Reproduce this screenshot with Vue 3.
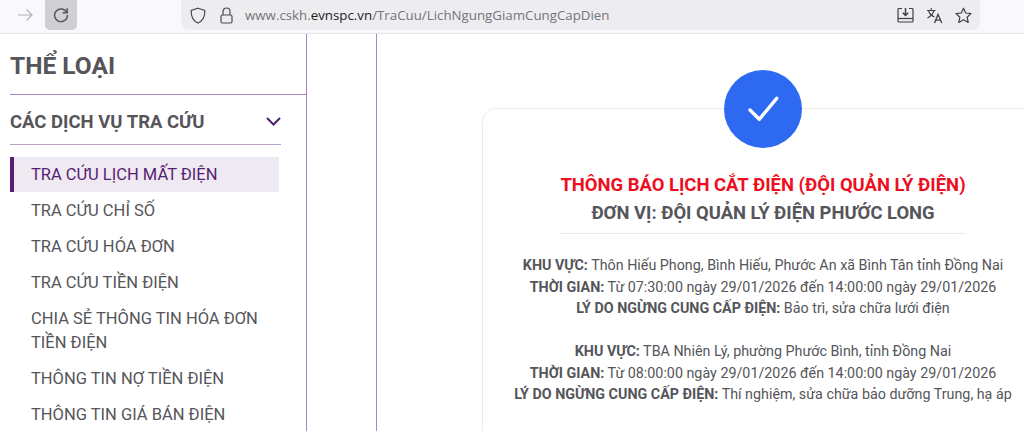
<script setup>
const menuItems = [
  { label: "TRA CỨU LỊCH MẤT ĐIỆN", active: true },
  { label: "TRA CỨU CHỈ SỐ" },
  { label: "TRA CỨU HÓA ĐƠN" },
  { label: "TRA CỨU TIỀN ĐIỆN" },
  { label: "CHIA SẺ THÔNG TIN HÓA ĐƠN TIỀN ĐIỆN" },
  { label: "THÔNG TIN NỢ TIỀN ĐIỆN" },
  { label: "THÔNG TIN GIÁ BÁN ĐIỆN" },
];

const notices = [
  {
    area: "Thôn Hiếu Phong, Bình Hiếu, Phước An xã Bình Tân tỉnh Đồng Nai",
    time: "Từ 07:30:00 ngày 29/01/2026 đến 14:00:00 ngày 29/01/2026",
    reason: "Bảo trì, sửa chữa lưới điện",
  },
  {
    area: "TBA Nhiên Lý, phường Phước Bình, tỉnh Đồng Nai",
    time: "Từ 08:00:00 ngày 29/01/2026 đến 14:00:00 ngày 29/01/2026",
    reason: "Thí nghiệm, sửa chữa bảo dưỡng Trung, hạ áp",
  },
];
</script>

<template>
  <div class="page">
    <header class="toolbar">
      <span class="nav-btn">
        <svg width="16" height="16" viewBox="0 0 16 16" fill="none" stroke="#b4b4b9" stroke-width="1.2">
          <path d="M1 8h14M9.5 2.5 15 8l-5.500 5.500" />
        </svg>
      </span>
      <span class="nav-btn nav-btn--reload">
        <svg width="16" height="16" viewBox="0 0 16 16" fill="none" stroke="#55555f" stroke-width="1.5">
          <path d="M13.800 5.600A6.400 6.400 0 1 0 14.400 8" />
          <path d="M14.200 1.200v4.600H9.600" />
        </svg>
      </span>
      <div class="urlbar">
        <svg class="urlbar__shield" width="16" height="17" viewBox="0 0 16 17" fill="none" stroke="#4a4a52" stroke-width="1.2">
          <path d="M8 1.200 14.800 3.400c.2 6-1.600 10.200-6.800 12.600C2.800 13.600 1 9.400 1.200 3.400Z" />
        </svg>
        <svg class="urlbar__lock" width="13" height="17" viewBox="0 0 13 17" fill="none" stroke="#4a4a52" stroke-width="1.2">
          <path d="M3 8V4.500a3.500 3.500 0 0 1 7 0V8" />
          <rect x="1" y="8" width="11" height="8" rx="1.500" />
        </svg>
        <span class="urlbar__text">www.cskh.<b>evnspc.vn</b>/TraCuu/LichNgungGiamCungCapDien</span>
        <span class="urlbar__actions">
          <svg width="17" height="16" viewBox="0 0 17 16" fill="none" stroke="#3f3f46" stroke-width="1.2">
            <path d="M5 1.500H2a1 1 0 0 0-1 1V14a1 1 0 0 0 1 1h13a1 1 0 0 0 1-1V2.500a1 1 0 0 0-1-1h-3" />
            <path d="M1 11.500h15" />
            <path d="M8.500 1v7M5.800 5.800l2.700 2.700 2.700-2.700" stroke-width="1.500" />
          </svg>
          <svg width="17" height="17" viewBox="0 0 17 17" fill="none" stroke="#3f3f46" stroke-width="1.1">
            <path d="M1 3.500h8.500M5.200 1v2.500M8 3.500C7 7 4.500 9.500 1.500 11M2.500 3.500C3.500 7 6 9 8.500 10" />
            <path d="M8.500 16 12 7.500 15.800 16M9.800 13.200h4.600" stroke-width="1.300" />
          </svg>
          <svg width="17" height="17" viewBox="0 0 17 17" fill="none" stroke="#3f3f46" stroke-width="1.200" stroke-linejoin="round">
            <path d="M8.500 1.200 10.700 6l5.300.6-3.900 3.600 1.100 5.200-4.700-2.700-4.700 2.700L4.900 10.200 1 6.600 6.300 6Z" />
          </svg>
        </span>
      </div>
    </header>

    <div class="content">
      <aside class="sidebar">
        <h2 class="sidebar__title">THỂ LOẠI</h2>
        <div class="sidebar__group">
          <div class="group-head">
            <span>CÁC DỊCH VỤ TRA CỨU</span>
            <svg width="15" height="9" viewBox="0 0 15 9" fill="none" stroke="#4f1f6e" stroke-width="2">
              <path d="M1 1l6.500 6.500L14 1" />
            </svg>
          </div>
          <ul class="menu">
            <li v-for="item in menuItems" :key="item.label" class="menu__item" :class="{ 'menu__item--active': item.active }">
              {{ item.label }}
            </li>
          </ul>
        </div>
      </aside>

      <div class="gutter"></div>

      <main class="main">
        <section class="card">
          <span class="card__badge">
            <svg width="34" height="36" viewBox="0 0 34 36" fill="none" stroke="#fff" stroke-width="3.400" stroke-linecap="round" stroke-linejoin="round">
              <path d="M4 19 13.300 28.300 30.700 7.300" />
            </svg>
          </span>
          <div class="card__inner">
            <h3 class="card__title">THÔNG BÁO LỊCH CẮT ĐIỆN (ĐỘI QUẢN LÝ ĐIỆN)</h3>
            <h4 class="card__unit">ĐƠN VỊ: ĐỘI QUẢN LÝ ĐIỆN PHƯỚC LONG</h4>
            <hr class="card__rule" />
            <div v-for="n in notices" :key="n.area" class="notice">
              <p><strong>KHU VỰC:</strong> {{ n.area }}</p>
              <p><strong>THỜI GIAN:</strong> {{ n.time }}</p>
              <p><strong>LÝ DO NGỪNG CUNG CẤP ĐIỆN:</strong> {{ n.reason }}</p>
            </div>
          </div>
        </section>
      </main>
    </div>
  </div>
</template>

<style scoped>
.page {
  height: 431px;
  overflow: hidden;
  display: flex;
  flex-direction: column;
  background: #fff;
  font-family: Roboto, "Liberation Sans", sans-serif;
  color: #55555a;
}

.toolbar {
  height: 34px;
  flex: none;
  box-sizing: border-box;
  display: flex;
  align-items: flex-start;
  padding-left: 9px;
  background: #f9f9fb;
  border-bottom: 1px solid #e4e4e7;
}

.nav-btn {
  width: 32px;
  height: 30px;
  margin-right: 4px;
  display: flex;
  align-items: center;
  justify-content: center;
  border-radius: 0 0 5px 5px;
}

.nav-btn--reload {
  background: #d0d0d4;
}

.urlbar {
  width: 799px;
  height: 30px;
  margin-left: 100px;
  box-sizing: border-box;
  display: flex;
  align-items: center;
  padding: 0 8px 0 9px;
  background: #ededf0;
  border-radius: 0 0 8px 8px;
}

.urlbar__lock {
  margin-left: 14px;
}

.urlbar__text {
  margin-left: 12px;
  font-family: "Open Sans", sans-serif;
  font-size: 13.3px;
  color: #74747b;
  white-space: nowrap;
}

.urlbar__text b {
  font-weight: 400;
  color: #202024;
}

.urlbar__actions {
  margin-left: auto;
  display: flex;
  align-items: center;
  gap: 12px;
}

.content {
  flex: 1;
  min-height: 0;
  display: flex;
}

.sidebar {
  width: 307px;
  flex: none;
  box-sizing: border-box;
  padding-left: 10px;
  border-right: 1px solid #a886bd;
}

.sidebar__title {
  margin: 0;
  height: 61px;
  line-height: 64px;
  box-sizing: border-box;
  font-size: 24.5px;
  font-weight: 700;
  border-bottom: 1px solid #a886bd;
}

.sidebar__group {
  width: 269px;
}

.group-head {
  height: 49px;
  box-sizing: border-box;
  padding-top: 4px;
  display: flex;
  align-items: center;
  justify-content: space-between;
  margin-right: -2px;
  font-size: 18.5px;
  font-weight: 700;
  box-shadow: 0 1px 0 #bba0cc;
}

.menu {
  list-style: none;
  margin: 13px 0 0;
  padding: 0;
}

.menu__item {
  padding: 5.95px 10px 5.95px 21px;
  font-size: 16.5px;
  line-height: 24px;
}

.menu__item--active {
  padding-left: 17px;
  padding-top: 6px;
  padding-bottom: 5px;
  margin-bottom: 1.4px;
  border-left: 4px solid #571f73;
  background: #efe9f2;
  color: #571f73;
}

.gutter {
  width: 69px;
  flex: none;
  border-right: 1px solid #a886bd;
}

.main {
  flex: 1;
  min-width: 0;
  padding: 74px 0 0 105px;
}

.card {
  position: relative;
  width: 562px;
  height: 400px;
  box-sizing: border-box;
  border: 1px solid #ececee;
  border-radius: 14px;
}

.card__badge {
  position: absolute;
  left: 241px;
  top: -39px;
  width: 78px;
  height: 78px;
  display: flex;
  align-items: center;
  justify-content: center;
  border-radius: 50%;
  background: #2e69f2;
}

.card__inner {
  padding-top: 62px;
  text-align: center;
}

.card__title {
  margin: 0;
  font-size: 18.45px;
  line-height: 28px;
  font-weight: 700;
  color: #ec0f1f;
}

.card__unit {
  margin: 0;
  font-size: 18.4px;
  line-height: 28px;
  font-weight: 700;
}

.card__rule {
  width: 406px;
  height: 1px;
  margin: 6px auto 21px;
  border: 0;
  background: #ececee;
}

.notice {
  margin-bottom: 21.5px;
}

.notice p {
  margin: 0;
  font-size: 14.3px;
  line-height: 21.5px;
}

.notice strong {
  font-weight: 700;
}
</style>

<style>
html,
body {
  margin: 0;
  overflow: hidden;
}
</style>
